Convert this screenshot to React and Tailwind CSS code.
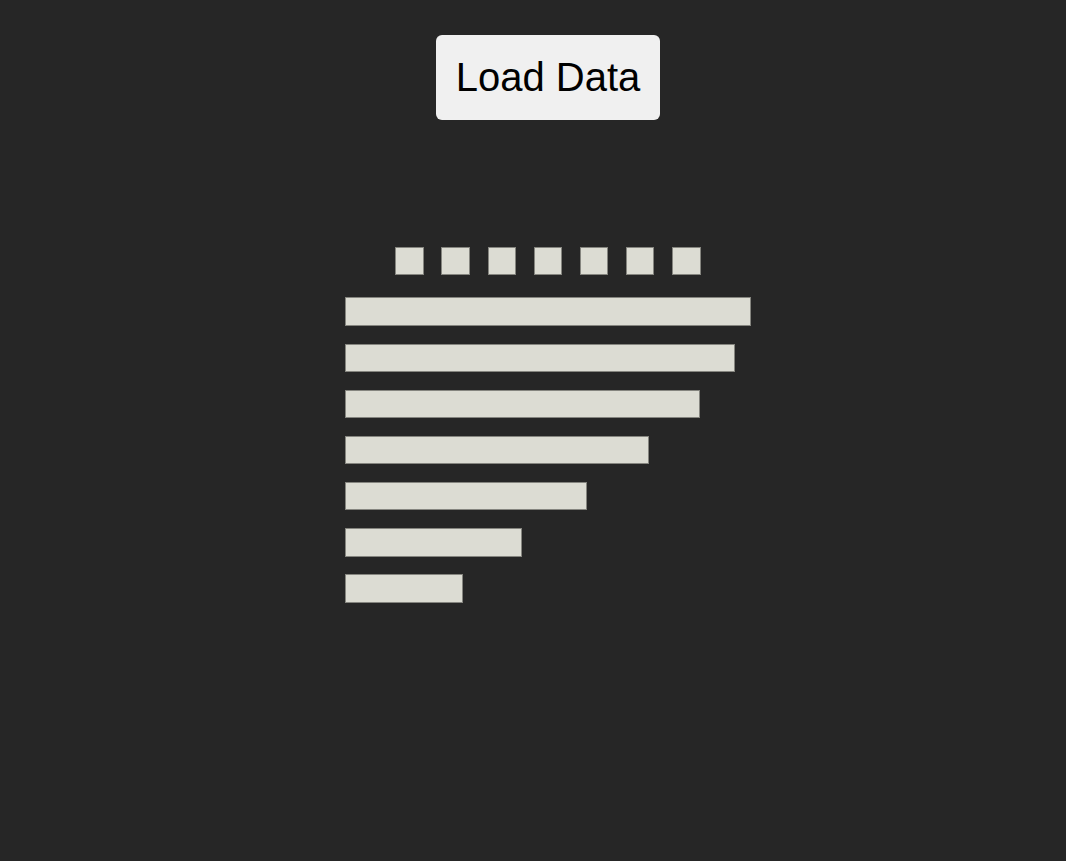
const markers = [
  { x: 50, width: 29 },
  { x: 96, width: 29 },
  { x: 143, width: 28 },
  { x: 189, width: 28 },
  { x: 235, width: 28 },
  { x: 281, width: 28 },
  { x: 327, width: 29 },
];

const bars = [
  { y: 50, width: 406, height: 29 },
  { y: 97, width: 390, height: 28 },
  { y: 143, width: 355, height: 28 },
  { y: 189, width: 304, height: 28 },
  { y: 235, width: 242, height: 28 },
  { y: 281, width: 177, height: 29 },
  { y: 327, width: 118, height: 29 },
];

// A filled block with a one-unit outline that stays inside its bounds.
function Block({ x, y, width, height }) {
  return (
    <rect
      x={x + 0.5}
      y={y + 0.5}
      width={width - 1}
      height={height - 1}
      className="fill-[#dcdcd3] stroke-[#85857f]"
    />
  );
}

export default function App() {
  return (
    <main className="flex min-h-screen flex-col items-center bg-[#262626] pt-[35px] pl-[30px] font-['Liberation_Sans',Arial,sans-serif]">
      <button
        type="button"
        className="rounded-md bg-[#f0f0f0] px-5 py-5 text-[40px] leading-[45px] text-black"
      >
        Load Data
      </button>
      <svg
        viewBox="0 0 406 356"
        role="img"
        aria-label="Bar chart"
        className="mt-[127px] w-[406px] max-w-full"
      >
        {markers.map((m) => (
          <Block key={m.x} x={m.x} y={0} width={m.width} height={28} />
        ))}
        {bars.map((b) => (
          <Block key={b.y} x={0} y={b.y} width={b.width} height={b.height} />
        ))}
      </svg>
    </main>
  );
}
